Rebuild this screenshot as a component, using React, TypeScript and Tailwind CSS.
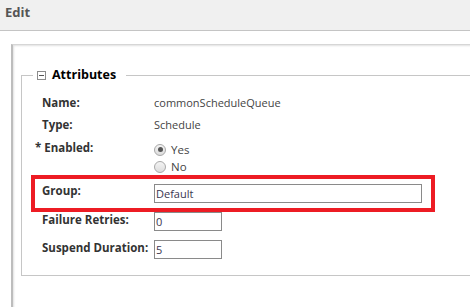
import React from 'react'

const labelCls = 'w-[112px] shrink-0 text-[11.5px] leading-[16px] font-bold text-[#333]'
const valueCls = 'text-[11px] leading-[16px] text-[#444]'

const Radio = ({ checked, label }: { checked?: boolean; label: string }) => (
  <div className="flex h-[17px] items-center gap-[5px]">
    <span className="flex h-[12px] w-[12px] items-center justify-center rounded-full border border-[#a8a8a8] bg-gradient-to-b from-[#f4f4f4] to-[#dcdcdc]">
      {checked && <span className="h-[5px] w-[5px] rounded-full bg-[#555]" />}
    </span>
    <span className="text-[11.5px] leading-[16px] text-[#444]">{label}</span>
  </div>
)

const Input = ({ value, width }: { value: string; width: string }) => (
  <div className={`h-[19px] ${width} border border-[#8a8a8a] bg-white pl-[1px] text-[11px] leading-[17px] text-[#3a3550]`}>
    {value}
  </div>
)

export default function App() {
  return (
    <div className="h-[307px] w-[470px] overflow-hidden bg-white font-['Open_Sans',sans-serif]">
      {/* Header */}
      <div className="h-[31px] border-b border-[#c4c4c4] bg-[#f0f0f0] px-[5px] pt-[3px] text-[13px] font-bold leading-[18px] text-[#555]">
        Edit
      </div>

      {/* Panel */}
      <div className="ml-[11px] mt-[13px] h-[300px] w-[480px] border-l-2 border-t border-l-[#bdbdbd] border-t-[#d6d6d6] shadow-[inset_1px_1px_2px_rgba(0,0,0,0.12)]">
        <fieldset className="ml-[8px] mt-[21px] w-[470px] border border-[#c6c6c6] pb-[16px]">
          <legend className="ml-[11px] flex h-[18px] items-center pl-[4px] pr-[10px]">
            <span className="flex h-[9px] w-[9px] items-center justify-center border border-[#8c8c8c] bg-white">
              <span className="h-px w-[5px] bg-[#555]" />
            </span>
            <span className="ml-[6px] text-[12.5px] font-bold leading-[18px] text-black">Attributes</span>
          </legend>

          <div className="mt-[11px] flex h-[22px] pl-[20px]">
            <div className={labelCls}>Name:</div>
            <div className={valueCls}>commonScheduleQueue</div>
          </div>

          <div className="flex h-[23px] pl-[20px]">
            <div className={labelCls}>Type:</div>
            <div className={valueCls}>Schedule</div>
          </div>

          <div className="flex h-[35px] pl-[13px]">
            <div className={labelCls + ' w-[119px]'}>* Enabled:</div>
            <div className="mt-[1px]">
              <Radio checked label="Yes" />
              <Radio label="No" />
            </div>
          </div>

          <div className="ml-[9px] flex h-[37px] w-[404px] border-4 border-[#ed1c24] pl-[7px]">
            <div className={labelCls + ' mt-[4px]'}>Group:</div>
            <div className="mt-[5px]">
              <Input value="Default" width="w-[268px]" />
            </div>
          </div>

          <div className="flex h-[28px] pl-[20px]">
            <div className={labelCls}>Failure Retries:</div>
            <Input value="0" width="w-[68px]" />
          </div>

          <div className="flex h-[19px] pl-[20px]">
            <div className={labelCls}>Suspend Duration:</div>
            <Input value="5" width="w-[68px]" />
          </div>
        </fieldset>
      </div>
    </div>
  )
}
